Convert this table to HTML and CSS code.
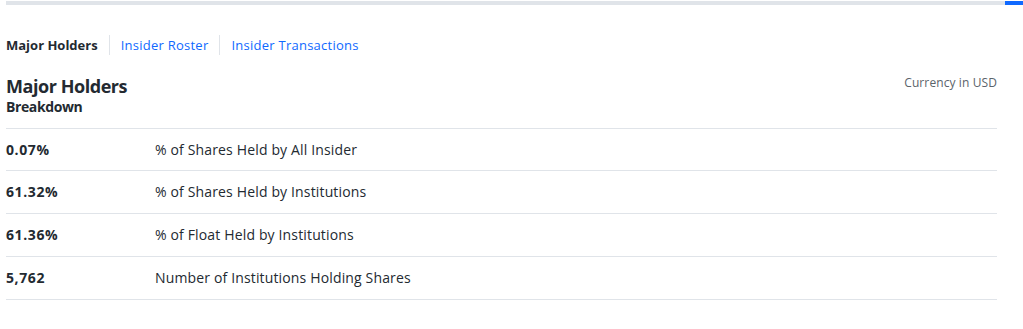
FILE: index.html
```html
<!DOCTYPE html>
<html>
<head>
<meta charset="utf-8">
<link rel="stylesheet" href="styles.css">
</head>
<body>
<div class="progress"><div class="track"></div><div class="thumb"></div></div>
<div class="page">
  <nav class="tabs">
    <span class="tab active">Major Holders</span>
    <span class="sep"></span>
    <a class="tab">Insider Roster</a>
    <span class="sep"></span>
    <a class="tab">Insider Transactions</a>
  </nav>
  <header class="head">
    <div>
      <h2 class="title">Major Holders</h2>
      <div class="sub">Breakdown</div>
    </div>
    <div class="currency">Currency in USD</div>
  </header>
  <table class="holders">
    <tr><td class="val">0.07%</td><td class="lab">% of Shares Held by All Insider</td></tr>
    <tr><td class="val">61.32%</td><td class="lab">% of Shares Held by Institutions</td></tr>
    <tr><td class="val">61.36%</td><td class="lab">% of Float Held by Institutions</td></tr>
    <tr><td class="val">5,762</td><td class="lab">Number of Institutions Holding Shares</td></tr>
  </table>
</div>
</body>
</html>
```
FILE: styles.css
```css
* { box-sizing: border-box; }
body {
  margin: 0;
  font-family: "Open Sans", "Noto Sans", sans-serif;
  color: #232a31;
  background: #fff;
}
.progress {
  display: flex;
  padding-top: 1px;
  padding-left: 6px;
}
.track {
  flex: 1;
  height: 4px;
  background: #e0e4e9;
}
.thumb {
  width: 18px;
  height: 4px;
  background: #0f69ff;
}
.page {
  width: 997px;
  padding-left: 6px;
}
.tabs {
  display: flex;
  align-items: center;
  margin-top: 30px;
  height: 20px;
}
.tab {
  font-size: 13px;
  color: #0f69ff;
  line-height: 20px;
  letter-spacing: 0.25px;
}
.tab.active {
  font-weight: 700;
  color: #232a31;
  letter-spacing: 0;
}
.sep {
  width: 1px;
  height: 20px;
  background: #e0e4e9;
  margin: 0 11px;
}
.head {
  display: flex;
  justify-content: space-between;
  align-items: flex-start;
  margin-top: 20px;
  padding-bottom: 11px;
  border-bottom: 1px solid #e0e4e9;
}
.title {
  margin: 0;
  font-size: 18px;
  line-height: 22px;
  font-weight: 700;
  letter-spacing: -0.45px;
}
.sub {
  font-size: 14px;
  font-weight: 700;
  line-height: 20px;
  letter-spacing: -0.4px;
}
.currency {
  font-size: 12px;
  color: #5b636a;
  line-height: 18px;
  margin-top: -1px;
  letter-spacing: 0.1px;
}
.holders {
  width: 100%;
  border-collapse: collapse;
}
.holders td {
  height: 43px;
  border-bottom: 1px solid #e0e4e9;
  font-size: 14px;
  padding: 0;
  vertical-align: middle;
}
.holders tr:first-child td { height: 41px; }
.val { width: 149px; font-weight: 700; letter-spacing: 0.6px; }
.lab { letter-spacing: 0.15px; }
```
